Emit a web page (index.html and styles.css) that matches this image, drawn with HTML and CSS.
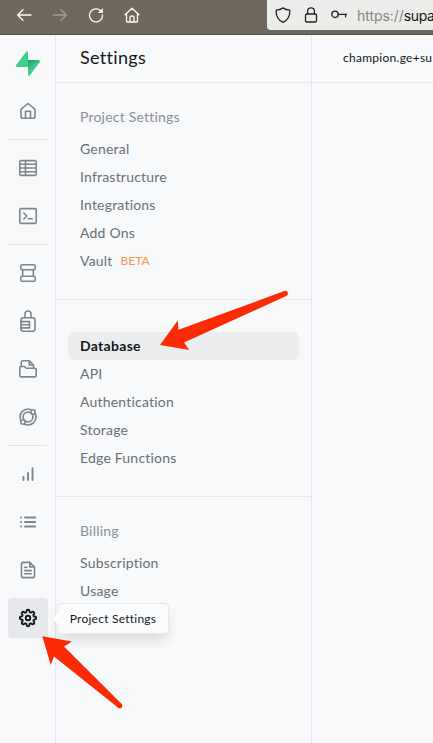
FILE: index.html
```html
<!DOCTYPE html>
<html lang="en">
<head>
<meta charset="utf-8">
<title>Settings</title>
<link rel="stylesheet" href="styles.css">
</head>
<body>
<div class="window">
  <header class="toolbar">
    <div class="controls">
      <svg class="ctl" viewBox="0 0 16 16"><path d="M15 8H2M7 2.700 1.700 8 7 13.300"/></svg>
      <svg class="ctl dim" viewBox="0 0 16 16"><path d="M1 8h13M9 2.700 14.300 8 9 13.300"/></svg>
      <svg class="ctl" viewBox="0 0 16 16"><path d="M13.300 4.600A6.500 6.500 0 1 0 14.500 8"/><path class="solid" d="M14.800 1v5H9.800z"/></svg>
      <svg class="ctl" viewBox="0 0 16 16"><path d="M1 7.800 8 1.300l7 6.500M2.500 6.800v7.400q0 .8.800.8h9.400q.8 0 .8-.8V6.800M6 15v-4.500q0-1.500 2-1.500t2 1.500V15"/></svg>
    </div>
    <div class="address">
      <svg class="addr-icon" viewBox="0 0 16 16"><path d="M8 .9C6 2.300 3.500 3 1.200 3.200.9 9 3.500 13.300 8 15.300c4.500-2 7.100-6.300 6.800-12.100C12.500 3 10 2.300 8 .9z"/></svg>
      <svg class="addr-icon" viewBox="0 0 16 16"><rect x="2.500" y="7" width="11" height="8" rx="1.300"/><path d="M4.600 7V4.200a3.400 3.400 0 0 1 6.800 0V7"/></svg>
      <svg class="addr-icon" viewBox="0 0 16 16"><circle cx="4" cy="7.300" r="3.200"/><path d="M7.200 7.300H16M14.600 7.300v2.600"/></svg>
      <span class="url">https://<b>supa</b></span>
    </div>
  </header>
  <div class="app">
    <nav class="rail">
      <svg class="logo" viewBox="0 0 24 25">
        <defs><linearGradient id="shade" x1="12" y1="9" x2="18" y2="16" gradientUnits="userSpaceOnUse"><stop stop-color="#249361"/><stop offset="1" stop-color="#3ecf8e"/></linearGradient></defs>
        <path fill="url(#shade)" d="M12 9h10.700c1.300 0 1.700 1.200 1 2.200L13.800 24.300c-.6.700-1.800.4-1.800-.6z"/>
        <path fill="#3ecf8e" d="M12 16H1.300C0 16-.4 14.800.3 13.800L10.200.7c.6-.7 1.800-.4 1.800.6z"/>
      </svg>
      <a class="rail-item"><svg viewBox="0 0 18 18"><path d="M2 7.200 9 1.500l7 5.700v7.600q0 1.500-1.500 1.500h-11Q2 16.300 2 14.800zM6.500 16.300v-7h5v7"/></svg></a>
      <hr>
      <a class="rail-item"><svg viewBox="0 0 18 18"><rect x=".8" y="1.600" width="16.400" height="14.800" rx="1.800"/><path d="M1 5.300h16M1 9h16M1 12.700h16M6.500 1.600v14.800"/></svg></a>
      <a class="rail-item"><svg viewBox="0 0 18 18"><rect x=".8" y="1.600" width="16.400" height="14.800" rx="1.200"/><path d="m4.800 6 3 3-3 3M9.300 11.700h4"/></svg></a>
      <hr>
      <a class="rail-item"><svg viewBox="0 0 18 18"><rect x="1.800" y=".8" width="14.400" height="5" rx="1.300"/><rect x="1.800" y="12.200" width="14.400" height="5" rx="1.300"/><path d="M3.700 5.800v6.400M14.300 5.800v6.400"/></svg></a>
      <a class="rail-item"><svg class="tall" viewBox="0 0 18 22"><rect x="2" y="7.700" width="14" height="13.500" rx="2.200"/><path d="M6 7.700V4a3 3 0 0 1 6 0v3.700M2 11.600h8.500v6.300H2M2 14.700h8.500"/></svg></a>
      <a class="rail-item"><svg viewBox="0 0 18 18"><path d="M2.300 6.500V2.300Q2.300.8 3.800.8h6.500L14.500 5v2.200M10.300.8V5h4.200M.8 8q0-1.500 1.500-1.500h3.200L7.200 8.200h8.300q1.700 0 1.700 1.700v5q0 2-2 2H2.800q-2 0-2-2z"/></svg></a>
      <a class="rail-item"><svg viewBox="0 0 18 18"><circle cx="9" cy="9" r="8"/><circle cx="9" cy="9" r="4.900"/><rect class="knot" x="12" y="2" width="4" height="4" rx="1"/><rect class="knot" x="2" y="12" width="4" height="4" rx="1"/></svg></a>
      <hr>
      <a class="rail-item"><svg viewBox="0 0 18 18"><path class="thick" d="M4.500 12v3M9 8v7M13.500 3.300V15"/></svg></a>
      <a class="rail-item"><svg viewBox="0 0 18 18"><path class="thick" d="M6 4.500h10.200M6 9h10.200M6 13.500h10.200M2 4.500h.1M2 9h.1M2 13.500h.1"/></svg></a>
      <a class="rail-item"><svg viewBox="0 0 18 18"><path d="M4 1.400h6.800L15.500 6v8.900q0 1.700-1.700 1.700H4.200q-1.700 0-1.700-1.700V3q0-1.600 1.500-1.600zM10.800 1.400V6h4.700M5.700 6.400h2M5.700 9.600h6.600M5.700 12.800h6.600"/></svg></a>
      <a class="rail-item active"><svg viewBox="0 0 24 24"><circle cx="12" cy="12" r="3"/><path d="M19.400 15a1.650 1.650 0 0 0 .33 1.820l.06.06a2 2 0 1 1-2.830 2.830l-.06-.06a1.650 1.650 0 0 0-2.820 1.170V21a2 2 0 0 1-4 0v-.09A1.650 1.650 0 0 0 7.180 19.730l-.06.06a2 2 0 1 1-2.830-2.830l.06-.06A1.650 1.650 0 0 0 3.090 14H3a2 2 0 0 1 0-4h.09A1.650 1.650 0 0 0 4.270 7.180l-.06-.06a2 2 0 1 1 2.830-2.830l.06.06A1.650 1.650 0 0 0 10 3.090V3a2 2 0 0 1 4 0v.09a1.650 1.650 0 0 0 2.820 1.180l.06-.06a2 2 0 1 1 2.830 2.830l-.06.06A1.650 1.650 0 0 0 20.910 10H21a2 2 0 0 1 0 4h-.09A1.650 1.650 0 0 0 19.400 15z"/></svg><span class="tooltip">Project Settings</span></a>
    </nav>
    <aside class="panel">
      <h1>Settings</h1>
      <section class="group">
        <h2>Project Settings</h2>
        <a>General</a><a>Infrastructure</a><a>Integrations</a><a>Add Ons</a><a>Vault<span class="beta">BETA</span></a>
      </section>
      <section class="group untitled">
        <a class="selected">Database</a><a>API</a><a>Authentication</a><a>Storage</a><a>Edge Functions</a>
      </section>
      <section class="group last">
        <h2>Billing</h2>
        <a>Subscription</a><a>Usage</a>
      </section>
    </aside>
    <main class="content"><div class="account">champion.ge+su</div></main>
  </div>
  <svg class="arrows" viewBox="0 0 433 743">
    <path d="M160 345 177.700 320.500 178.500 329.800 284.300 291.100A2.600 2.600 0 0 1 286.200 296L184 342.500 189.300 350z"/>
    <path d="M42.300 636.200 72 641.500 64 646.500 122 704.200A2.700 2.700 0 0 1 118.500 708L54 656.500 50.800 665z"/>
  </svg>
</div>
</body>
</html>
```
FILE: styles.css
```css
* { box-sizing: border-box; }
body { margin: 0; background: #f8f9fb; font-family: Lato, "Liberation Sans", sans-serif; }
svg { fill: none; stroke: currentColor; stroke-linecap: round; stroke-linejoin: round; flex: none; }
.window { position: relative; width: 433px; height: 743px; overflow: hidden; display: flex; flex-direction: column; }
.toolbar { height: 35px; flex: none; display: flex; justify-content: space-between; background: #6e695c; border-bottom: 1px solid #565147; }
.controls { display: flex; gap: 20px; padding: 7px 0 0 16px; color: #fbfbfb; }
.ctl { width: 16px; height: 16px; stroke-width: 1.3; }
.ctl.dim { color: #a39f96; }
.solid { fill: currentColor; stroke: none; }
.address { width: 166px; height: 30px; padding: 0 0 1px 8px; display: flex; align-items: center; gap: 12px; background: #ececea; border-bottom-left-radius: 4px; color: #222; }
.addr-icon { width: 16px; height: 16px; stroke-width: 1.3; }
.url { font: 14px Inter, sans-serif; line-height: 20px; color: #858583; margin: 2px 0 0 -2px; letter-spacing: -.05px; white-space: nowrap; }
.url b { color: #111; font-weight: 400; letter-spacing: -.35px; }
.app { flex: 1; display: flex; min-height: 0; }
.rail { width: 56px; border-right: 1px solid #e6e8eb; padding: 16px 7px 0 8px; display: flex; flex-direction: column; gap: 8px; flex: none; }
.logo { width: 24px; height: 25px; margin: 0 0 7px 8px; stroke: none; overflow: visible; }
.rail hr { width: 39px; height: 1px; margin: 0; border: 0; background: #dfe3e6; flex: none; }
.rail-item { position: relative; width: 40px; height: 40px; flex: none; display: flex; align-items: center; justify-content: center; border-radius: 4px; color: #7e868c; }
.rail-item svg { width: 18px; height: 18px; stroke-width: 1.6; }
.rail-item .tall { height: 22px; }
.rail-item .thick { stroke-width: 1.9; }
.knot { fill: #f8f9fb; }
.active { background: #e6e8eb; color: #11181c; }
.rail-item.active svg { stroke-width: 2.5; overflow: visible; }
.tooltip { position: absolute; left: 49px; top: 5px; width: 112px; height: 31px; z-index: 2; display: flex; align-items: center; justify-content: center; border: 1px solid #e6e8eb; border-radius: 4px; background: #fbfcfd; box-shadow: 0 8px 14px -3px #11181c26; font-size: 12px; letter-spacing: .23px; white-space: nowrap; }
.tooltip::before { content: ""; position: absolute; left: -4px; top: 11px; width: 7px; height: 7px; background: #fbfcfd; transform: rotate(45deg); }
.panel { width: 256px; flex: none; border-right: 1px solid #e6e8eb; }
.panel h1 { height: 48px; margin: 0; padding: 0 24px; border-bottom: 1px solid #e6e8eb; font-size: 18px; line-height: 45px; font-weight: 400; color: #11181c; letter-spacing: .3px; }
.group { padding: 24px 12px; border-bottom: 1px solid #e6e8eb; font-size: 14px; letter-spacing: .2px; }
.untitled { padding-top: 32px; }
.last { border: 0; }
.group h2 { margin: 0 0 8px; padding: 0 12px; font-size: 14px; line-height: 20px; font-weight: 400; color: #889096; }
.group a { display: flex; align-items: center; height: 28px; padding: 0 12px 2px; border-radius: 6px; color: #687076; }
.group .selected { width: 231px; background: #ecedee; color: #11181c; font-weight: 700; letter-spacing: .3px; }
.beta { margin-left: 8px; font-size: 12px; letter-spacing: 0; color: #fa934e; }
.content { flex: 1; min-width: 0; }
.account { height: 48px; padding-left: 31px; border-bottom: 1px solid #e6e8eb; line-height: 46px; font-size: 12px; letter-spacing: .27px; color: #11181c; white-space: nowrap; }
.arrows { position: absolute; inset: 0; width: 433px; height: 743px; z-index: 3; pointer-events: none; fill: #fc2a05; stroke: none; }
```
